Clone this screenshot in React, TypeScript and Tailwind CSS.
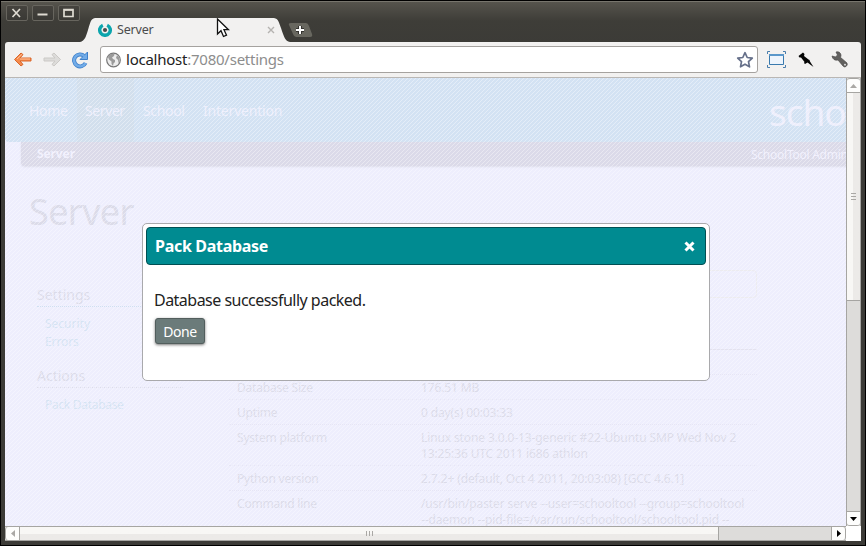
import type { ReactNode } from "react";

const rows = [
  { label: "Database Size", lines: ["176.51 MB"] },
  { label: "Uptime", lines: ["0 day(s) 00:03:33"] },
  { label: "System platform", lines: ["Linux stone 3.0.0-13-generic #22-Ubuntu SMP Wed Nov 2", "13:25:36 UTC 2011 i686 athlon"] },
  { label: "Python version", lines: ["2.7.2+ (default, Oct 4 2011, 20:03:08) [GCC 4.6.1]"] },
  { label: "Command line", lines: ["/usr/bin/paster serve --user=schooltool --group=schooltool", "--daemon --pid-file=/var/run/schooltool/schooltool.pid --"] },
];

function WindowButton({ children }: { children: ReactNode }) {
  return (
    <button className="flex h-4 w-[22px] items-center justify-center rounded-[2px] border border-[#67655e] bg-linear-to-b from-[#45433e] to-[#3a3935]">
      <svg width="12" height="10" viewBox="0 0 12 10" fill="none" stroke="#dfdbd2" strokeWidth="1.7">
        {children}
      </svg>
    </button>
  );
}

function TitleBar() {
  return (
    <header className="flex h-[42px] items-start bg-linear-to-b from-[#56544d] via-[#3e3d38] via-45% to-[#3c3b37] pl-[5px] pt-[3px]">
      <div className="flex gap-1">
        <WindowButton><path d="M1.500 1l7.500 8M9 1L1.500 9" /></WindowButton>
        <WindowButton><path d="M.5 6.500h10" strokeWidth="2" /></WindowButton>
        <WindowButton><path d="M1 1.500h9v7h-9z" /><path d="M1 2h9" /></WindowButton>
      </div>
      <div className="relative mt-[13px] h-6 w-[211px]">
        <svg className="absolute inset-0" width="211" height="24" viewBox="0 0 211 24">
          <path d="M0 24C5 23 6 18 8 12C11 2 11 0 17 0H192C198 0 198 2 201 10C204 19 205 23 210 24Z" fill="#f2f1f0" />
        </svg>
        <div className="relative flex h-6 items-center pl-[18px]">
          <svg width="14" height="14" viewBox="0 0 14 14">
            <path d="M4.800 2.200A5.300 5.300 0 1 0 9.200 2.200" fill="none" stroke="#0ca5ad" strokeWidth="3.400" />
            <circle cx="7" cy="7" r="2.100" fill="#4a4b4b" />
          </svg>
          <span className="ml-[5px] text-[12.5px] tracking-[-0.2px] text-[#4c4c4c]">Server</span>
          <svg className="ml-auto mr-[16px]" width="8" height="8" viewBox="0 0 8 8" stroke="#b5b3b0" strokeWidth="1.400">
            <path d="M1 1l6 6M7 1L1 7" />
          </svg>
        </div>
      </div>
      <svg className="-ml-[3px] mt-[18px]" width="25" height="14" viewBox="0 0 25 14">
        <path d="M3 0H18Q20 0 21 3L24 11Q25 14 22 14H8Q6 14 5 11L1 2Q0 0 3 0Z" fill="#68675f" />
        <path d="M12 3v8M8 7h8" stroke="#33322e" strokeWidth="4" />
        <path d="M12 3v8M8 7h8" stroke="#fff" strokeWidth="2" />
      </svg>
    </header>
  );
}

function Toolbar() {
  return (
    <div className="flex h-9 items-center rounded-t-[3px] border-b border-[#bab7b4] bg-[#f2f1f0] pl-2">
      <svg width="20" height="17" viewBox="0 0 20 17">
        <path d="M1.500 8.500L8 2L10 3.600L7 7H18V10H7L10 13.400L8 15Z" fill="#f58a4b" stroke="#d9662a" strokeLinejoin="round" />
        <path d="M4 8L9 3.300M7 8H17" stroke="#ffc09a" fill="none" />
      </svg>
      <svg className="ml-[9px]" width="20" height="17" viewBox="0 0 20 17">
        <path d="M18.500 8.500L12 2L10 3.600L13 7H2V10H13L10 13.400L12 15Z" fill="#dddcda" stroke="#cbc9c6" strokeLinejoin="round" />
      </svg>
      <svg className="ml-[9px]" width="18" height="18" viewBox="0 0 18 18">
        <path d="M13.200 5A6 6 0 1 0 14.500 12" fill="none" stroke="#3f80ca" strokeWidth="4" />
        <path d="M16.500 1V8.500H9Z" fill="#72ace8" stroke="#3f80ca" />
        <path d="M13.200 5A6 6 0 1 0 14.500 12" fill="none" stroke="#72ace8" strokeWidth="2.400" />
      </svg>
      <div className="ml-[11px] flex h-[27px] w-[658px] items-center rounded-[3px] border border-[#a5a29f] bg-white pl-[5px] pr-[3px]">
        <svg width="16" height="16" viewBox="0 0 16 16">
          <circle cx="7.500" cy="8" r="6.800" fill="#ececec" stroke="#777" strokeWidth="1.200" />
          <path d="M3 3Q6 1 8.500 2L8 4L6 5.500L7 7L9 8L9 10L7.500 11.500L7 14L5.500 12V9.500L3 7.500L2 5ZM11 3L13.500 6V10L12.500 11L12 8L10 6Z" fill="#9b9b9b" />
        </svg>
        <div className="ml-[4px] text-[15px] leading-[25px] tracking-[-0.24px] text-[#222]">
          localhost<span className="text-[#8d8d8d]">:7080/settings</span>
        </div>
        <svg className="ml-auto" width="18" height="18" viewBox="0 0 18 18">
          <path d="M9 1.700L11.200 6.500L16.300 7.100L12.500 10.600L13.500 15.800L9 13.200L4.500 15.800L5.500 10.600L1.700 7.100L6.800 6.500Z" fill="#fff" stroke="#66708a" strokeWidth="1.700" strokeLinejoin="round" />
        </svg>
      </div>
      <svg className="ml-[9px]" width="19" height="17" viewBox="0 0 19 17">
        <path d="M.5 3V.5H3M16 .5h2.500V3M18.500 14v2.500H16M3 16.500H.5V14" fill="none" stroke="#4a7eac" />
        <path d="M2.500 3.500h14v10h-14z" fill="#edf4fc" stroke="#397aae" />
        <path d="M2 4h15" stroke="#5a97ca" strokeWidth="2" />
      </svg>
      <svg className="ml-3" width="16" height="16" viewBox="0 0 16 16">
        <path d="M.5 4L5 .5L6.500 2L6 4L10.500 7.500L11.500 8L12 9.500L15.500 15L9.500 10.500L7 12L6 11L6.500 10L3 5.500L1.500 5.500Z" fill="#050505" />
      </svg>
      <svg className="ml-[17px]" width="18" height="18" viewBox="0 0 18 18">
        <path d="M5 1Q9 0 10 4L9.600 6.500L16 12Q17 14 15 15.500Q13.500 16.500 12 15L7 9Q2 10 1 5L4.500 6L6.500 4Z" fill="#62615f" stroke="#4d4c4a" strokeWidth=".7" />
        <circle cx="14" cy="13.700" r=".9" fill="#eee" />
      </svg>
    </div>
  );
}

function ServerPage() {
  return (
    <main className="relative h-full w-full overflow-hidden bg-[#eeeefd] text-[12px] text-[#dbdbe9]">
      <nav className="flex h-16 items-stretch rounded-bl-[4px] bg-[#d3e2f3] pl-4 text-[14px] text-[#edeefc]">
        <a className="flex w-14 items-center pl-2 pt-px tracking-[-0.3px]">Home</a>
        <a className="flex w-[57px] items-center bg-[#d2dfed] pl-2 pt-px tracking-[-0.4px]">Server</a>
        <a className="flex w-[60px] items-center pl-[9px] pt-px tracking-[-0.35px]">School</a>
        <a className="flex items-center pl-[9px] pt-px tracking-[-0.2px]">Intervention</a>
        <div className="ml-auto w-[77px] overflow-hidden whitespace-nowrap pt-[7px] text-[37px] leading-[53px] tracking-[-1px]">schooltool</div>
      </nav>
      <div className="ml-4 flex h-6 items-center justify-between rounded-bl-[4px] bg-[#dbdae9] pl-4 text-[#f0effd] shadow-[0_1px_2px_#dcdcea]">
        <b className="text-[12px] tracking-[-0.1px]">Server</b>
        <div className="w-[95px] overflow-hidden whitespace-nowrap pt-px text-[12px] tracking-[-0.25px]">SchoolTool Administrator</div>
      </div>
      <h1 className="ml-6 mt-[20px] h-[57px] text-[36px] leading-[52px] tracking-[-0.6px]">Server</h1>
      <div className="flex">
        <aside className="ml-8 mt-[43px] w-[146px] shrink-0">
          <h2 className="h-[21px] border-b border-dotted border-[#cfdff1] text-[14px] leading-[18px]">Settings</h2>
          <ul className="ml-2 mt-2 text-[#d5e3f3] leading-[18px]"><li>Security</li><li className="tracking-[-0.1px]">Errors</li></ul>
          <h2 className="mt-4 h-[21px] border-b border-dotted border-[#dcdcea] text-[14px] leading-[18px]">Actions</h2>
          <ul className="ml-2 mt-2 text-[#d5e3f3] leading-[18px] tracking-[-0.3px]"><li>Pack Database</li></ul>
        </aside>
        <section className="ml-[46px] mt-[27px] w-[528px]">
          <div className="h-7 rounded-[4px] border border-[#ecebf0]" />
          <div className="h-[52px] border-b border-[#e3e2f0]" />
          <div className="h-[25px] border-b border-dotted border-[#e6e5f5]" />
          {rows.map((row) => (
            <div key={row.label} className="flex border-b border-dotted border-[#e6e5f5] pb-[3px] pl-[8px] pt-[5px] leading-4">
              <div className="w-[184px] tracking-[-0.2px]">{row.label}</div>
              <div className="whitespace-nowrap tracking-[-0.12px]">{row.lines.map((line) => <div key={line}>{line}</div>)}</div>
            </div>
          ))}
        </section>
      </div>
      <div className="absolute inset-0 bg-[repeating-linear-gradient(135deg,transparent_0_2.1px,#ffffff60_2.1px_2.828px)]" />
      <PackDialog />
    </main>
  );
}

function PackDialog() {
  return (
    <div role="dialog" className="absolute left-[137px] top-[145px] h-[158px] w-[568px] rounded-[5px] border border-[#a9a9ac] bg-white p-[3px] text-[#222]">
      <div className="flex h-[38px] items-center justify-between rounded-[4px] border border-[#004f53] bg-[#008b91] pl-2 pr-2.5 text-white">
        <b className="text-[16px] leading-[36px] tracking-[-0.3px]">Pack Database</b>
        <svg width="11" height="11" viewBox="0 0 11 11" stroke="#fff" strokeWidth="3"><path d="M1.500 1.500l8 8M9.500 1.500l-8 8" /></svg>
      </div>
      <p className="ml-2 mt-[24px] h-[22px] text-[16px] leading-[22px] tracking-[-0.52px]">Database successfully packed.</p>
      <button className="ml-[9px] mt-[7px] block h-[26px] w-[50px] rounded-[3px] border border-[#525e5d] bg-[#6b7b7a] text-[14px] leading-[25px] tracking-[-0.4px] text-white shadow-[0_1px_3px_#777]">Done</button>
    </div>
  );
}

function VerticalScrollbar() {
  return (
    <div className="flex w-[15px] shrink-0 flex-col border-x border-[#a6a5a2] bg-[#dddcda]">
      <div className="flex h-[15px] items-center justify-center rounded-t-[3px] border-b border-t border-[#a6a5a2] bg-[#fdfdfc]">
        <svg width="7" height="4" viewBox="0 0 7 4"><path d="M0 4L3.500 0L7 4Z" fill="#aaa8a5" /></svg>
      </div>
      <div className="flex h-[208px] items-center justify-center border-b border-[#a6a5a2] bg-linear-to-r from-[#f8f7f5] from-50% to-[#eceae8] to-50%">
        <svg width="5" height="7" viewBox="0 0 5 7"><path d="M0 .5h5M0 3.500h5M0 6.500h5" stroke="#aaa8a5" /></svg>
      </div>
      <div className="mt-auto flex h-[15px] items-center justify-center rounded-b-[3px] border-y border-[#a6a5a2] bg-[#fdfdfc]">
        <svg width="7" height="4" viewBox="0 0 7 4"><path d="M0 0L3.500 4L7 0Z" fill="#000" /></svg>
      </div>
    </div>
  );
}

function HorizontalScrollbar() {
  return (
    <div className="flex h-[15px] bg-white">
      <div className="flex w-[841px] border-y border-[#a6a5a2] bg-[#dddcda]">
        <div className="flex w-[15px] items-center justify-center rounded-l-[3px] border-x border-[#a6a5a2] bg-[#fdfdfc]">
          <svg width="4" height="7" viewBox="0 0 4 7"><path d="M4 0L0 3.500L4 7Z" fill="#aaa8a5" /></svg>
        </div>
        <div className="flex w-[699px] items-center justify-center border-r border-[#a6a5a2] bg-linear-to-b from-[#f8f7f5] from-50% to-[#eceae8] to-50%">
          <svg width="7" height="5" viewBox="0 0 7 5"><path d="M.5 0v5M3.500 0v5M6.500 0v5" stroke="#aaa8a5" /></svg>
        </div>
        <div className="ml-auto flex w-[15px] items-center justify-center rounded-r-[3px] border-x border-[#a6a5a2] bg-[#fdfdfc]">
          <svg width="4" height="7" viewBox="0 0 4 7"><path d="M0 0L4 3.500L0 7Z" fill="#000" /></svg>
        </div>
      </div>
    </div>
  );
}

export default function App() {
  return (
    <div className="relative h-[546px] w-[866px] overflow-hidden border border-black bg-[#3c3b37] font-['Noto_Sans','Open_Sans',sans-serif]">
      <div className="h-[544px] border-t border-[#77756d]">
        <div className="-mt-px h-[41px] border-t border-[#77756d]"><TitleBar /></div>
        <div className="relative ml-1 w-[856px]">
          <Toolbar />
          <div className="flex h-[448px]">
            <div className="min-w-0 flex-1"><ServerPage /></div>
            <VerticalScrollbar />
          </div>
          <HorizontalScrollbar />
        </div>
      </div>
      <svg className="absolute left-[215px] top-[17px]" width="14" height="21" viewBox="0 0 14 21">
        <path d="M1.500 1V16L5 12.700L7.500 18.500L10.500 17.200L8 11.700H12.500Z" fill="#fff" stroke="#111" strokeWidth="1.300" />
      </svg>
    </div>
  );
}
